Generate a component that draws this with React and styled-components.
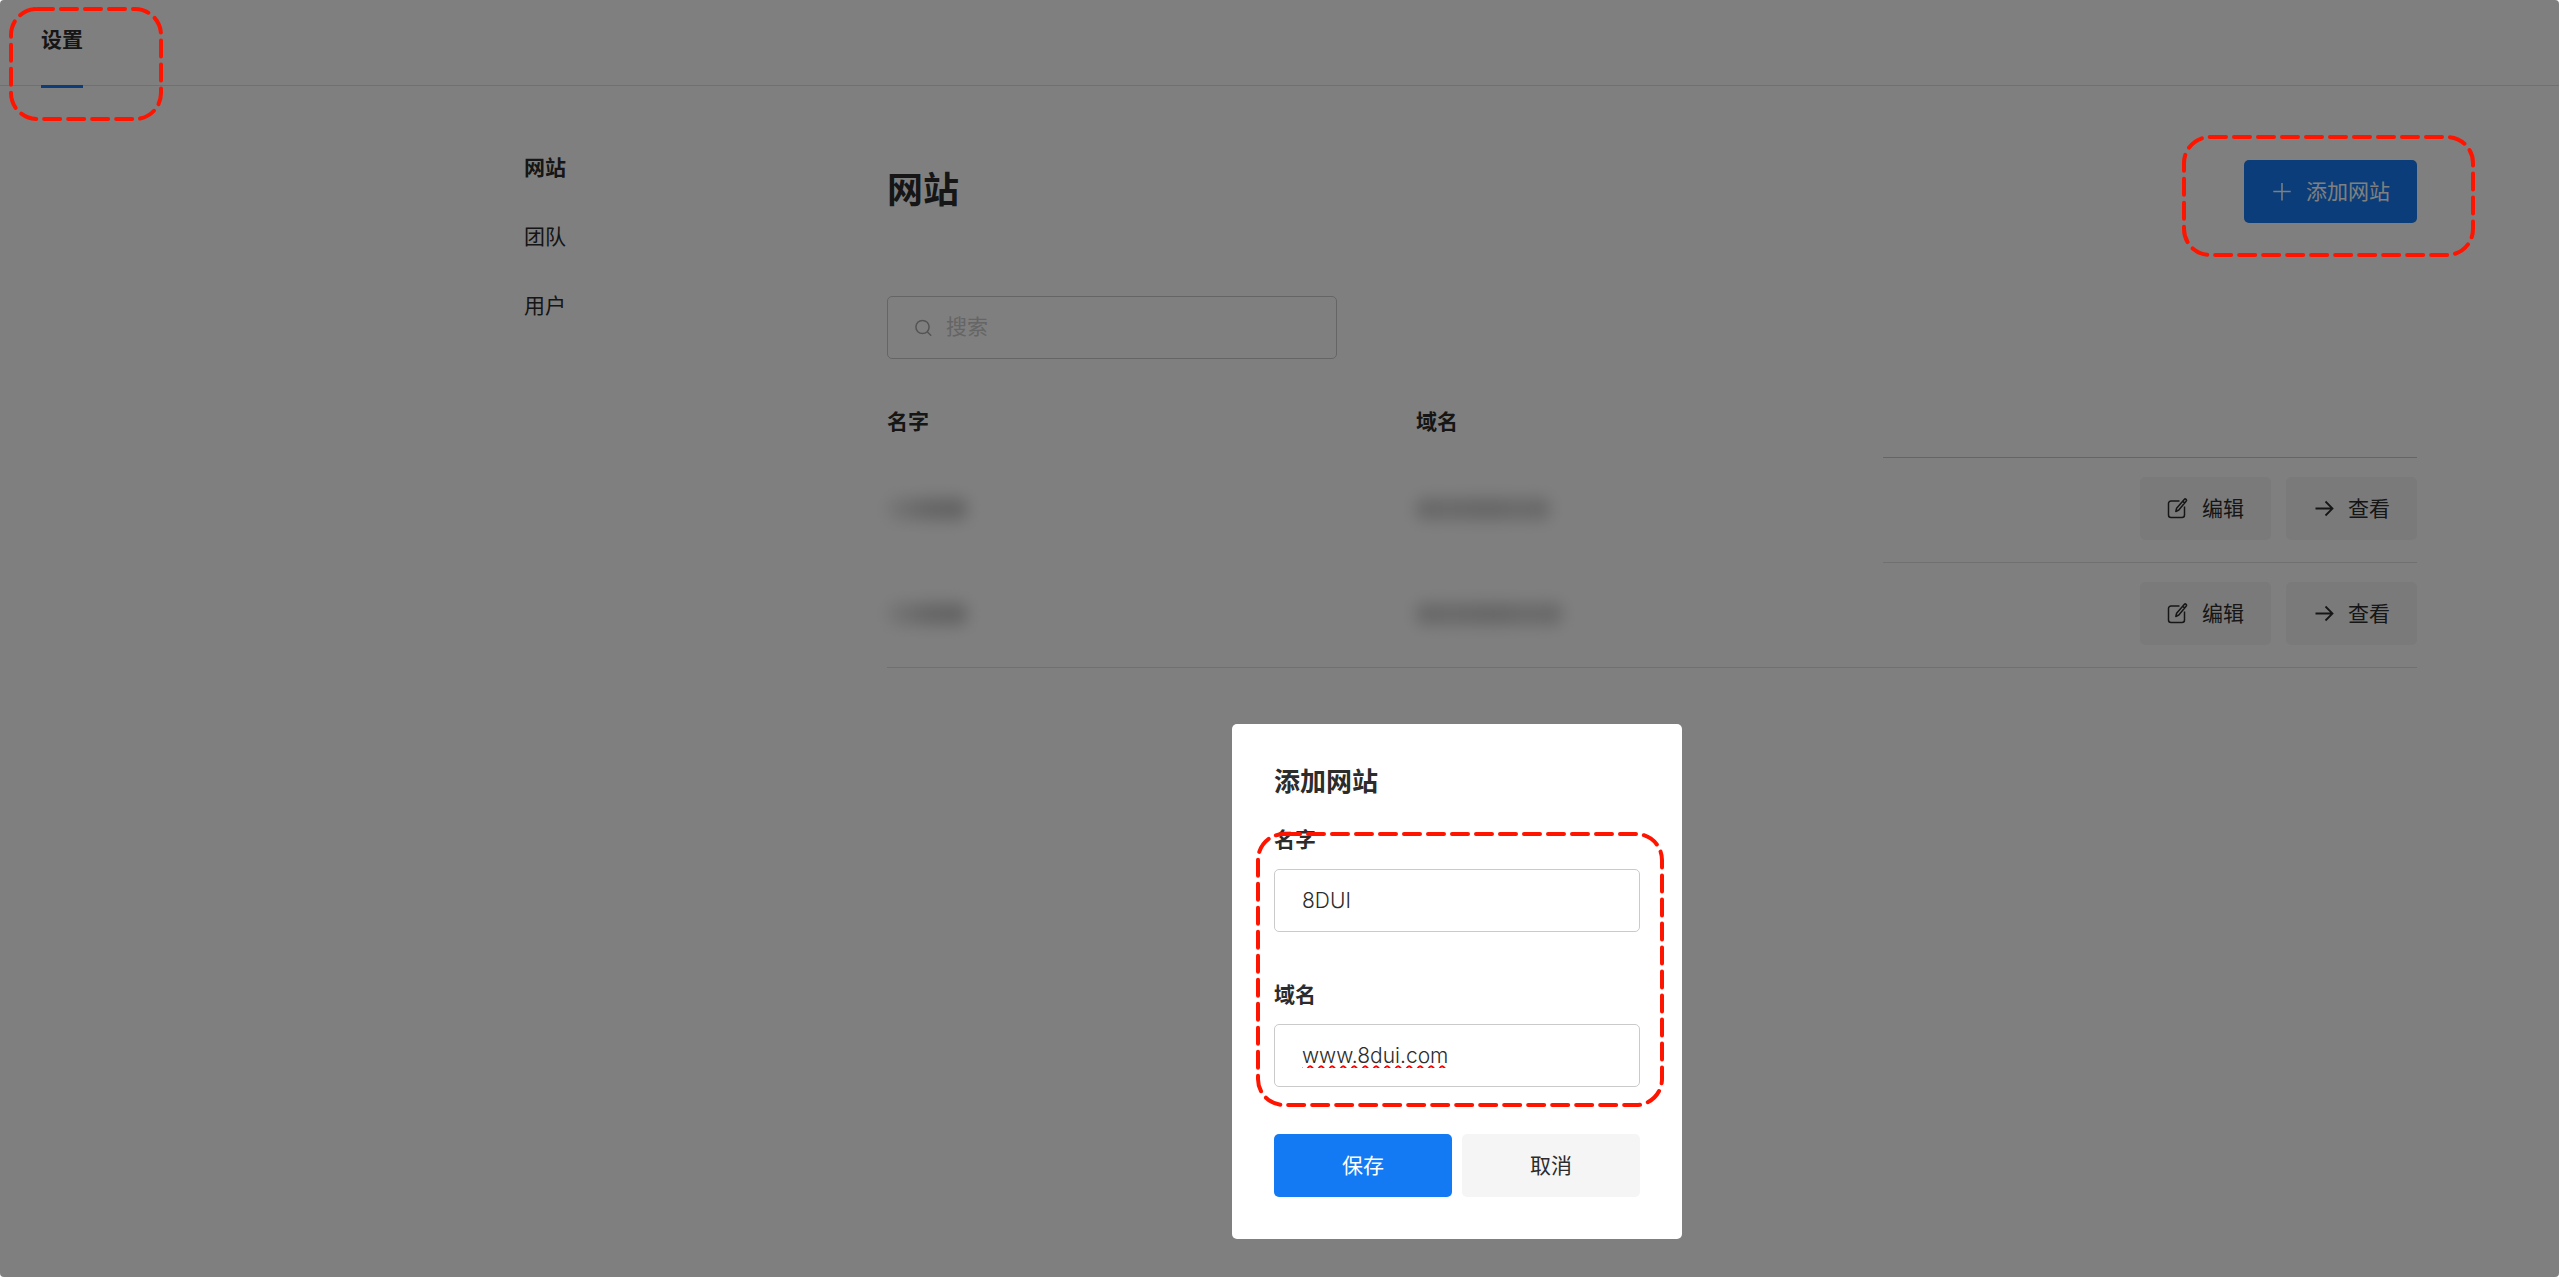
import React, { useState } from "react";
import styled, { createGlobalStyle } from "styled-components";

const COLORS = {
  text: "#2c2c2c",
  blue: "#147af3",
  white: "#ffffff",
  grey_100: "#f5f5f5",
  grey_300: "#e1e1e1",
  grey_400: "#cacaca",
  grey_500: "#a8a8a8",
  red: "#ff1400",
};

const GlobalStyle = createGlobalStyle`
  * {
    box-sizing: border-box;
  }
  body {
    margin: 0;
    background: ${COLORS.white};
    color: ${COLORS.text};
    font-family: Inter, "Noto Sans CJK SC", sans-serif;
    font-size: 21px;
    line-height: 31px;
  }
  button,
  input {
    font: inherit;
    color: inherit;
  }
`;

const Page = styled.div`
  position: relative;
  min-height: 100vh;
  border-radius: 4px;
  overflow: hidden;
`;

const Header = styled.header`
  display: flex;
  height: 86px;
  padding: 24px 41px 0;
  border-bottom: 1px solid ${COLORS.grey_300};
`;

const Tab = styled.a`
  height: 64px;
  border-bottom: 3px solid ${COLORS.blue};
  color: inherit;
  font-weight: 700;
  text-decoration: none;
`;

const Main = styled.main`
  display: grid;
  grid-template-columns: 363px 1fr;
  padding: 66px 142px 0 524px;
`;

const SideNav = styled.nav`
  display: flex;
  flex-direction: column;
  align-items: flex-start;
  gap: 38px;
`;

const NavLink = styled.a`
  color: inherit;
  font-weight: ${({ $active }) => ($active ? 700 : 400)};
  text-decoration: none;
`;

const Content = styled.section`
  padding-top: 8px;
`;

const TitleRow = styled.div`
  display: flex;
  justify-content: space-between;
  height: 63px;
  h1 {
    margin: 0;
    font-size: 36px;
    line-height: 60px;
    font-weight: 700;
  }
`;

const Button = styled.button`
  display: inline-flex;
  align-items: center;
  justify-content: center;
  gap: 14px;
  height: 63px;
  padding: 0 27px;
  border: 0;
  border-radius: 5px;
  background: ${({ $primary }) => ($primary ? COLORS.blue : COLORS.grey_100)};
  color: ${({ $primary }) => ($primary ? COLORS.white : COLORS.text)};
  white-space: nowrap;
  svg {
    flex: none;
  }
`;

const SearchBox = styled.label`
  display: flex;
  align-items: center;
  gap: 13px;
  width: 450px;
  height: 63px;
  margin-top: 73px;
  padding: 0 27px;
  border: 1px solid ${COLORS.grey_400};
  border-radius: 5px;
  svg {
    flex: none;
  }
  input {
    flex: 1;
    min-width: 0;
    padding: 0 0 2px;
    border: 0;
    outline: 0;
    background: transparent;
  }
  input::placeholder {
    color: ${COLORS.grey_400};
    opacity: 1;
  }
`;

const Table = styled.table`
  width: 100%;
  margin-top: 47px;
  border-collapse: separate;
  border-spacing: 0;
  table-layout: fixed;
  th {
    height: 52px;
    padding: 0;
    text-align: left;
    vertical-align: top;
    font-weight: 700;
  }
  th:last-child {
    width: 534px;
    border-bottom: 1px solid ${COLORS.grey_400};
  }
  td {
    height: 105px;
    padding: 19px 0 22px;
    border-bottom: 1px solid transparent;
  }
  td:last-child,
  tr:last-child td {
    border-bottom-color: ${COLORS.grey_300};
  }
`;

const NameHead = styled.th`
  width: 529px;
`;

const Masked = styled.span`
  display: block;
  width: ${({ $width }) => $width}px;
  height: 22px;
  border-radius: 8px;
  background: ${({ $fade }) =>
    $fade
      ? "linear-gradient(90deg, #efefef, #cccccc 50%, #c4c4c4)"
      : "linear-gradient(90deg, #cecece, #d4d4d4 25%, #cccccc 55%, #d6d6d6 75%, #cecece)"};
  filter: blur(8px);
`;

const Actions = styled.div`
  display: flex;
  justify-content: flex-end;
  gap: 15px;
`;

const Overlay = styled.div`
  position: absolute;
  inset: 0;
  display: flex;
  justify-content: center;
  align-items: flex-start;
  padding: 724px 0 0 355px;
  background: rgba(0, 0, 0, 0.5);
`;

const Modal = styled.form`
  position: relative;
  width: 450px;
  padding: 42px;
  border-radius: 5px;
  background: ${COLORS.white};
  h2 {
    margin: 0 0 27px;
    font-size: 26px;
    line-height: 31px;
    font-weight: 700;
  }
`;

const Field = styled.div`
  display: flex;
  flex-direction: column;
  gap: 14px;
  margin-bottom: 47px;
  label {
    font-weight: 700;
  }
  input {
    width: 100%;
    height: 63px;
    padding: 0 27px;
    border: 1px solid ${COLORS.grey_400};
    border-radius: 5px;
    outline: 0;
    font-weight: 300;
  }
`;

const DomainInput = styled.input`
  text-decoration: underline wavy #ff0000 2px;
  text-decoration-skip-ink: none;
  text-underline-offset: 2px;
`;

const ModalButtons = styled.div`
  display: grid;
  grid-template-columns: 1fr 1fr;
  gap: 10px;
`;

// dashed marker that lies over the part it points at
const Marker = styled.svg`
  position: absolute;
  top: ${({ $top }) => $top}px;
  left: ${({ $left }) => $left};
  right: ${({ $right }) => $right};
  overflow: visible;
  pointer-events: none;
  rect {
    fill: none;
    stroke: ${COLORS.red};
    stroke-width: 4px;
    stroke-linecap: round;
    stroke-dasharray: 16 8;
  }
`;

const Highlight = ({ width, height, ...place }) => (
  <Marker width={width} height={height} aria-hidden="true" {...place}>
    <rect width={width} height={height} rx="26" />
  </Marker>
);

const PlusIcon = () => (
  <svg width="21" height="21" viewBox="0 0 21 21" fill="none" stroke="currentColor" strokeWidth="1.5">
    <path d="M11 2v17.500M2.300 10.500h17.400" />
  </svg>
);

const SearchIcon = () => (
  <svg width="18" height="18" viewBox="0 0 18 18" fill="none" stroke={COLORS.grey_500} strokeWidth="1.5">
    <circle cx="7.500" cy="8" r="6.600" />
    <path d="M12.200 12.800l4 4" />
  </svg>
);

const EditIcon = () => (
  <svg width="21" height="21" viewBox="0 0 21 21" fill="none" stroke="currentColor" strokeWidth="1.5" strokeLinejoin="round">
    <path d="M12.500 3H4a2.500 2.500 0 0 0-2.500 2.500v11.500a2.500 2.500 0 0 0 2.500 2.500h11a2.500 2.500 0 0 0 2.500-2.500V8.500" />
    <path d="M17.200 1.400a1.300 1.300 0 0 1 1.900 1.800L11.800 12l-3 1.500.8-3.300zM15.600 3.200l2 1.700" />
  </svg>
);

const ArrowIcon = () => (
  <svg width="21" height="21" viewBox="0 0 21 21" fill="none" stroke="currentColor" strokeWidth="1.8">
    <path d="M2.500 10.500h17M12.500 3.500l7 7-7 7" />
  </svg>
);

const sites = [
  { id: 1, name: 80, domain: 134 },
  { id: 2, name: 80, domain: 146 },
];

const SiteRow = ({ site }) => (
  <tr>
    <td>
      <Masked $width={site.name} $fade />
    </td>
    <td>
      <Masked $width={site.domain} />
    </td>
    <td>
      <Actions>
        <Button type="button">
          <EditIcon />
          编辑
        </Button>
        <Button type="button">
          <ArrowIcon />
          查看
        </Button>
      </Actions>
    </td>
  </tr>
);

const AddSiteModal = () => {
  const [name, setName] = useState("8DUI");
  const [domain, setDomain] = useState("www.8dui.com");

  return (
    <Modal role="dialog" aria-labelledby="modal-title" onSubmit={(e) => e.preventDefault()}>
      <h2 id="modal-title">添加网站</h2>
      <Field>
        <label htmlFor="name">名字</label>
        <input id="name" value={name} onChange={(e) => setName(e.target.value)} />
      </Field>
      <Field>
        <label htmlFor="domain">域名</label>
        <DomainInput id="domain" value={domain} onChange={(e) => setDomain(e.target.value)} />
      </Field>
      <ModalButtons>
        <Button type="submit" $primary>
          保存
        </Button>
        <Button type="button">取消</Button>
      </ModalButtons>
      <Highlight width={404} height={271} $top={110} $left="26px" />
    </Modal>
  );
};

const App = () => {
  return (
    <>
      <GlobalStyle />
      <Page>
        <Header>
          <Tab href="#settings">设置</Tab>
        </Header>
        <Main>
          <SideNav>
            <NavLink href="#websites" $active>
              网站
            </NavLink>
            <NavLink href="#teams">团队</NavLink>
            <NavLink href="#users">用户</NavLink>
          </SideNav>
          <Content>
            <TitleRow>
              <h1>网站</h1>
              <Button type="button" $primary>
                <PlusIcon />
                添加网站
              </Button>
            </TitleRow>
            <SearchBox>
              <SearchIcon />
              <input type="search" placeholder="搜索" aria-label="搜索" />
            </SearchBox>
            <Table>
              <thead>
                <tr>
                  <NameHead>名字</NameHead>
                  <th>域名</th>
                  <th aria-label="操作" />
                </tr>
              </thead>
              <tbody>
                {sites.map((site) => (
                  <SiteRow key={site.id} site={site} />
                ))}
              </tbody>
            </Table>
          </Content>
        </Main>
        <Overlay>
          <AddSiteModal />
        </Overlay>
        <Highlight width={150} height={110} $top={9} $left="11px" />
        <Highlight width={289} height={118} $top={137} $right="86px" />
      </Page>
    </>
  );
};

export default App;
